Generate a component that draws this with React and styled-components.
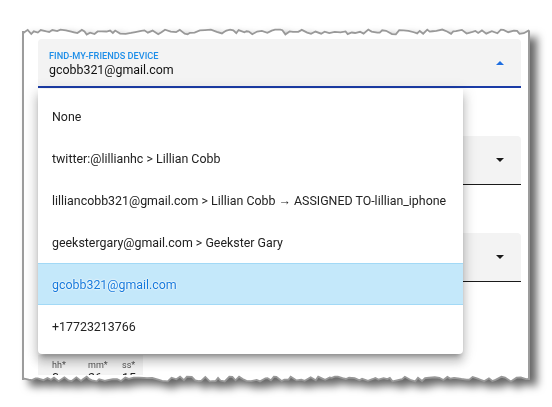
import React from "react";
import styled, { createGlobalStyle } from "styled-components";

const GlobalStyle = createGlobalStyle`
  html, body {
    margin: 0;
    padding: 0;
    background: #ffffff;
    font-family: Roboto, "Liberation Sans", sans-serif;
  }
`;

const PAPER_W = 508;

const Page = styled.div`
  width: 552px;
  height: 407px;
  padding: 28px 0 0 22px;
  box-sizing: border-box;
  overflow: hidden;
`;

const Paper = styled.div`
  width: ${PAPER_W}px;
  display: flex;
  flex-direction: column;
  filter: drop-shadow(7px 6px 4px rgba(0, 0, 0, 0.6));
`;

const Edge = styled.svg`
  display: block;
  width: ${PAPER_W}px;
  height: 8px;
`;

const Sheet = styled.div`
  position: relative;
  height: 336px;
  background: #ffffff;
  border-left: 2px solid #9c9c9c;
  border-right: 2px solid #9c9c9c;
  padding: 3px 7px 0 14px;
  overflow: hidden;
`;

const Form = styled.div`
  display: flex;
  flex-direction: column;
  gap: 48px;
`;

const Field = styled.div`
  height: 49px;
  box-sizing: border-box;
  background: #f3f3f3;
  border-radius: 4px 4px 0 0;
  border-bottom: ${(p) => (p.$active ? "2px solid #1b3ca6" : "1px solid #1a1a1a")};
  display: flex;
  align-items: center;
  padding: 0 14px 0 11px;
`;

const FieldText = styled.div`
  flex: 1;
  display: flex;
  flex-direction: column;
  padding-top: 2px;
`;

const Label = styled.div`
  font-size: 9.2px;
  font-weight: 500;
  color: #1e8ee8;
  text-transform: uppercase;
  line-height: 12px;
`;

const Value = styled.div`
  font-size: 12.4px;
  color: #111;
  line-height: 16px;
`;

const Arrow = styled.span`
  width: 0;
  height: 0;
  border-left: 4px solid transparent;
  border-right: 4px solid transparent;
  ${(p) =>
    p.$up
      ? "border-bottom: 4px solid #1f6fe0;"
      : "border-top: 4px solid #1a1a1a;"}
  margin-right: 3px;
  filter: drop-shadow(0 0 1px #fff);
`;

const TimeBox = styled.div`
  margin-top: 73px;
  width: 105px;
  height: 40px;
  background: #f3f3f3;
  display: flex;
  padding: 5px 0 0 14px;
  box-sizing: border-box;
`;

const TimeCol = styled.div`
  width: ${(p) => p.$w}px;
  display: flex;
  flex-direction: column;
`;

const TimeLabel = styled.div`
  font-size: 9px;
  color: #555;
  line-height: 10px;
`;

const TimeValue = styled.div`
  font-size: 12.4px;
  color: #222;
  line-height: 15px;
`;

const Menu = styled.ul`
  position: absolute;
  left: 14px;
  top: 53px;
  width: 425px;
  margin: 0;
  padding: 6px 0 7px;
  list-style: none;
  background: #fff;
  border-radius: 0 0 4px 4px;
  box-shadow: 0 5px 5px -3px rgba(0, 0, 0, 0.3), 0 8px 10px 1px rgba(0, 0, 0, 0.16),
    0 3px 14px 2px rgba(0, 0, 0, 0.12);
`;

const Item = styled.li`
  height: 42px;
  box-sizing: border-box;
  display: flex;
  align-items: center;
  padding-left: 14px;
  white-space: nowrap;
  font-size: 12.4px;
  color: ${(p) => (p.$selected ? "#1479dc" : "#222")};
  background: ${(p) => (p.$selected ? "#c4e8fa" : "transparent")};
  border-top: 1px solid ${(p) => (p.$selected ? "#a2d9f6" : "transparent")};
  border-bottom: 1px solid ${(p) => (p.$selected ? "#a2d9f6" : "transparent")};
  text-shadow: ${(p) =>
    p.$selected ? "0 0 2px #fff, 0 0 2px #fff, 0 0 1px #fff" : "none"};
`;

// deterministic torn-paper outline
function tornPoints(seed, flip) {
  let s = seed;
  const rnd = () => {
    s = (s * 9301 + 49297) % 233280;
    return s / 233280;
  };
  const pts = [];
  let x = 0;
  while (x < PAPER_W) {
    const y = 1.5 + rnd() * 5;
    pts.push([x, flip ? 8 - y : y]);
    x += 2 + rnd() * 4;
  }
  pts.push([PAPER_W, 4]);
  return pts;
}

const TornEdge = ({ bottom, seed }) => {
  const pts = tornPoints(seed, bottom);
  const line = pts.map((p) => p.join(",")).join(" ");
  const poly = bottom
    ? `1,0 ${line} ${PAPER_W - 1},0`
    : `1,8 ${line} ${PAPER_W - 1},8`;
  return (
    <Edge viewBox={`0 0 ${PAPER_W} 8`}>
      <polygon points={poly} fill="#fff" />
      <polyline points={line} fill="none" stroke="#999" strokeWidth="1.8" />
      <line x1="1" y1={bottom ? 0 : 8} x2="1" y2={bottom ? 5 : 3} stroke="#9c9c9c" strokeWidth="2" />
      <line
        x1={PAPER_W - 1}
        y1={bottom ? 0 : 8}
        x2={PAPER_W - 1}
        y2={bottom ? 5 : 3}
        stroke="#9c9c9c"
        strokeWidth="2"
      />
    </Edge>
  );
};

const options = [
  "None",
  "twitter:@lillianhc > Lillian Cobb",
  "lilliancobb321@gmail.com > Lillian Cobb \u2192 ASSIGNED TO-lillian_iphone",
  "geekstergary@gmail.com > Geekster Gary",
  "gcobb321@gmail.com",
  "+17723213766",
];

export default function App() {
  const selected = "gcobb321@gmail.com";
  return (
    <>
      <GlobalStyle />
      <Page>
        <Paper>
          <TornEdge seed={17} />
          <Sheet>
            <Form>
              <Field $active>
                <FieldText>
                  <Label>Find-my-friends device</Label>
                  <Value>{selected}</Value>
                </FieldText>
                <Arrow $up />
              </Field>
              <Field>
                <FieldText>
                  <Value />
                </FieldText>
                <Arrow />
              </Field>
              <Field>
                <FieldText>
                  <Value />
                </FieldText>
                <Arrow />
              </Field>
            </Form>
            <TimeBox>
              <TimeCol $w={36}>
                <TimeLabel>hh*</TimeLabel>
                <TimeValue>0</TimeValue>
              </TimeCol>
              <TimeCol $w={34}>
                <TimeLabel>mm*</TimeLabel>
                <TimeValue>26</TimeValue>
              </TimeCol>
              <TimeCol $w={20}>
                <TimeLabel>ss*</TimeLabel>
                <TimeValue>15</TimeValue>
              </TimeCol>
            </TimeBox>
            <Menu>
              {options.map((o) => (
                <Item key={o} $selected={o === selected}>
                  {o}
                </Item>
              ))}
            </Menu>
          </Sheet>
          <TornEdge bottom seed={83} />
        </Paper>
      </Page>
    </>
  );
}
